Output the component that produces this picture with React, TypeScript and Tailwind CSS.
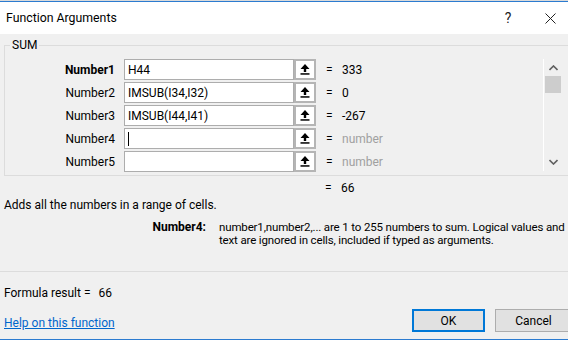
import React from "react";

const font = { fontFamily: 'Roboto, "Noto Sans", sans-serif' };

function UpIcon() {
  return (
    <svg width="10" height="11" viewBox="0 0 10 11">
      <path d="M5 0 L9.5 5 L6.2 5 L6.2 8 L3.8 8 L3.8 5 L0.5 5 Z" fill="#000" />
      <rect x="0.5" y="9.2" width="9" height="1.5" fill="#000" />
    </svg>
  );
}

type Row = { label: string; bold?: boolean; text: string; value: string; grey?: boolean; caret?: boolean };

const rows: Row[] = [
  { label: "Number1", bold: true, text: "H44", value: "333" },
  { label: "Number2", text: "IMSUB(I34,I32)", value: "0" },
  { label: "Number3", text: "IMSUB(I44,I41)", value: "-267" },
  { label: "Number4", text: "", value: "number", grey: true, caret: true },
  { label: "Number5", text: "", value: "number", grey: true },
];

export default function App() {
  return (
    <div
      className="w-[568px] h-[340px] overflow-hidden flex flex-col bg-[#f0f0f0] text-[12px] text-black"
      style={font}
    >
      <div className="h-[1px] bg-[#dadada] shrink-0" />
      <div className="h-[1px] bg-[#2b7bd0] shrink-0" />
      {/* title bar */}
      <div className="h-[32px] bg-white flex items-center shrink-0">
        <span className="ml-[6px] text-[12.3px]">Function Arguments</span>
        <span className="ml-auto text-[14px] text-[#222] w-[20px] text-center">?</span>
        <span className="ml-[22px] mr-[8px] w-[20px] flex justify-center">
          <svg width="11" height="11" viewBox="0 0 11 11">
            <path d="M0.5 0.5 L10.5 10.5 M10.5 0.5 L0.5 10.5" stroke="#222" strokeWidth="1" />
          </svg>
        </span>
      </div>

      {/* group box */}
      <div className="mt-[11px] ml-[4px] w-[580px] h-[131px] border border-[#dcdcdc] relative shrink-0">
        <span className="absolute top-[-9px] left-[5px] px-[2px] bg-[#f0f0f0] text-[12px] leading-[16px]">SUM</span>
        <div className="flex pt-[13px]">
          <div className="flex flex-col gap-[2px] w-[538px]">
            {rows.map((r) => (
              <div key={r.label} className="flex items-center h-[21px]">
                <div className={`w-[110px] text-right ${r.bold ? "font-bold" : ""}`}>{r.label}</div>
                <div className="ml-[9px] w-[170px] h-[21px] bg-white border border-[#adadad] flex items-center pl-[3px]">
                  {r.caret ? <span className="w-[1px] h-[14px] bg-black" /> : <span>{r.text}</span>}
                </div>
                <div className="w-[22px] h-[21px] border-2 border-[#b5b5b5] bg-white flex items-center justify-center">
                  <UpIcon />
                </div>
                <span className="ml-[10px] w-[16px]">=</span>
                <span className={r.grey ? "text-[#a0a0a0]" : ""}>{r.value}</span>
              </div>
            ))}
          </div>
          <div className="flex h-[112px]">
            <div className="w-[1px] bg-white" />
            <div className="w-[18px] flex flex-col items-center">
              <svg className="mt-[6px]" width="9" height="6" viewBox="0 0 9 6">
                <path d="M0.5 5 L4.5 1 L8.5 5" stroke="#606060" strokeWidth="1.6" fill="none" />
              </svg>
              <div className="mt-[5px] w-[16px] h-[17px] bg-[#cdcdcd]" />
              <svg className="mt-auto mb-[6px]" width="9" height="6" viewBox="0 0 9 6">
                <path d="M0.5 1 L4.5 5 L8.5 1" stroke="#606060" strokeWidth="1.6" fill="none" />
              </svg>
            </div>
          </div>
        </div>
      </div>

      <div className="mt-[4px] h-[16px] flex items-center shrink-0">
        <span className="ml-[325px] w-[16px]">=</span>
        <span>66</span>
      </div>
      <div className="mt-[1px] h-[16px] flex items-center pl-[4px] shrink-0">Adds all the numbers in a range of cells.</div>

      <div className="mt-[8px] flex shrink-0 leading-[13px]">
        <div className="w-[206px] text-right font-bold">Number4:</div>
        <div className="ml-[13px] whitespace-nowrap text-[11.5px] tracking-[-0.15px]">
          <div>number1,number2,... are 1 to 255 numbers to sum. Logical values and</div>
          <div>text are ignored in cells, included if typed as arguments.</div>
        </div>
      </div>

      <div className="mt-[24px] h-[1px] bg-[#dcdcdc] shrink-0" />

      <div className="mt-[13px] h-[16px] flex items-center pl-[4px] shrink-0">
        <span>Formula result =</span>
        <span className="ml-[8px]">66</span>
      </div>

      <div className="mt-[8px] flex items-center shrink-0">
        <a className="ml-[4px] text-[#0066cc] underline leading-[16px] mt-[4px]">Help on this function</a>
        <div className="ml-auto w-[73px] h-[23px] border-2 border-[#0078d7] bg-[#e1e1e1] flex items-center justify-center">OK</div>
        <div className="ml-[10px] mr-[-4px] w-[77px] h-[23px] border border-[#adadad] bg-[#e1e1e1] flex items-center justify-center">Cancel</div>
      </div>

      <div className="mt-auto h-[1px] bg-[#2b7bd0] shrink-0" />
    </div>
  );
}
